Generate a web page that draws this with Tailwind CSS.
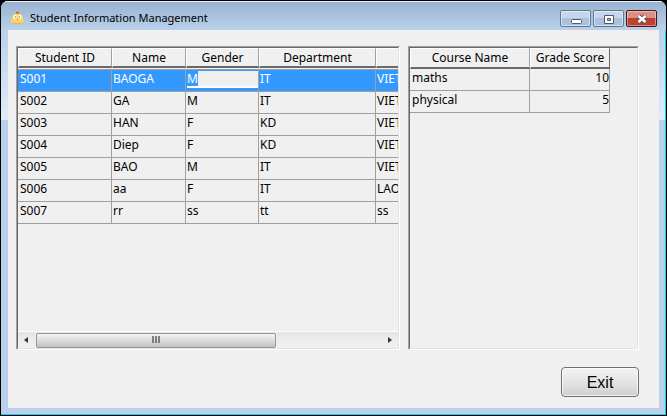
<!DOCTYPE html>
<html lang="en">
<head>
<meta charset="utf-8">
<title>Student Information Management</title>
<script src="https://cdn.jsdelivr.net/npm/@tailwindcss/browser@4"></script>
</head>
<body class="bg-black">
<main class="flex h-screen flex-col overflow-hidden rounded-t-lg border border-black bg-[#b9d1ea] font-['Noto_Sans','Open_Sans',sans-serif] text-xs text-black">
  <header class="flex h-[29px] shrink-0 items-start justify-between border-t border-white/70 bg-linear-to-b from-[#98b3d1] to-[#b9d1ea] pr-[9px] pl-2">
    <div class="flex items-center gap-[5px] pt-2">
      <svg class="size-4" viewBox="0 0 16 16" aria-hidden="true">
        <path d="M7.500 4 7 2.500 8.500 1.500 10 2.500 10 4Z" fill="#d8403c"/>
        <path d="M2 11C2 9.500 3.200 8.500 3.500 6.500 4 4.500 6 3.500 8.500 3.500S13 4.500 13.500 6.500C13.800 8.500 15 9.500 15 11c0 2.200-3 3-6.500 3S2 13.200 2 11Z" fill="#fbd75a"/>
        <path d="M3 12c2 1.500 9 1.500 11 0-.5 1.500-3 2-5.500 2S3.500 13.500 3 12Z" fill="#f2b130"/>
        <circle cx="6.300" cy="7" r="1.900" fill="#fff"/><circle cx="10.700" cy="7" r="1.900" fill="#fff"/>
        <circle cx="6.700" cy="7" r=".7" fill="#765"/><circle cx="10.300" cy="7" r=".7" fill="#765"/>
        <path d="m7.600 8.500h1.800l-.9 1.800Z" fill="#e87a30"/>
      </svg>
      <h1 class="text-[11px] leading-4">Student Information Management</h1>
    </div>
    <div class="flex gap-[2px] pt-2">
      <button aria-label="Minimize" class="flex h-[17px] w-[31px] items-center justify-center rounded-xs border border-[#5f7896] bg-linear-to-b from-[#c5d7ea] from-50% to-[#a9c1dc] to-50% inset-ring inset-ring-white/50"><svg class="h-3 w-4" viewBox="0 0 16 12"><rect x="3.500" y="6.500" width="10" height="4" rx="1" fill="#fff" stroke="#535666"/></svg></button>
      <button aria-label="Maximize" class="flex h-[17px] w-[31px] items-center justify-center rounded-xs border border-[#5f7896] bg-linear-to-b from-[#c5d7ea] from-50% to-[#a9c1dc] to-50% inset-ring inset-ring-white/50"><svg class="h-3 w-4" viewBox="0 0 16 12"><path fill-rule="evenodd" d="M3.500 2.500h9v8h-9Zm3 3v2h3v-2Z" fill="#fff" stroke="#535666"/></svg></button>
      <button aria-label="Close" class="flex h-[17px] w-[31px] items-center justify-center rounded-xs border border-[#4b1520] bg-linear-to-b from-[#dc8f83] from-50% to-[#bd4030] to-50% inset-ring inset-ring-white/40"><svg class="h-3 w-4" viewBox="0 0 16 12"><path d="m4.500 3 7 6m0-6-7 6" stroke="#535666" stroke-width="4.500"/><path d="m4.500 3 7 6m0-6-7 6" stroke="#fff" stroke-width="2.500"/></svg></button>
    </div>
  </header>
  <div class="flex min-h-0 flex-1 border-r border-b border-[#20c8f0] bg-linear-to-b from-[#b9d1ea] to-[#e0ecf8] bg-size-[100%_90px] bg-no-repeat pr-[6px] pb-[6px] pl-[7px]">
    <div class="flex min-w-0 flex-1 flex-col gap-[17px] bg-[#f0f0f0] pt-4 pr-5 pl-2">
      <div class="flex h-[304px] gap-2">
        <section aria-label="Students" class="flex w-[384px] shrink-0 flex-col border border-[#a0a0a0] border-r-white border-b-white">
          <div class="flex min-h-0 flex-1 flex-col overflow-hidden border border-[#696969] border-r-[#e3e3e3] border-b-[#e3e3e3]">
            <div class="min-h-0 flex-1 overflow-hidden">
              <table class="w-[380px] table-fixed border-separate border-spacing-0">
                <colgroup><col class="w-[94px]"><col class="w-[74px]"><col class="w-[73px]"><col class="w-[117px]"><col></colgroup>
                <thead>
                  <tr class="h-5 *:border-t *:border-r *:border-b-2 *:border-l *:border-t-white *:border-l-white *:border-r-[#a0a0a0] *:border-b-[#696969] *:p-0 *:font-normal *:leading-4 *:last:border-r-0"><th>Student ID</th><th>Name</th><th>Gender</th><th>Department</th><th></th></tr>
                  <tr aria-hidden="true"><td colspan="5" class="h-[2px] border-b border-[#a0a0a0] p-0"></td></tr>
                </thead>
                <tbody class="[&_td]:h-[22px] [&_td]:overflow-hidden [&_td]:border-r [&_td]:border-b [&_td]:border-[#a0a0a0] [&_td]:p-0 [&_td]:pt-px [&_td]:pl-px [&_td]:align-top [&_td]:leading-4 [&_td]:first:pl-[2px] [&_td]:last:border-r-0">
                  <tr class="bg-[#3399ff] text-white"><td>S001</td><td>BAOGA</td><td><div class="flex h-[17px] items-start border-b-2 border-white bg-[#f0f0f0]"><input aria-label="Gender" value="M" class="field-sizing-content h-[15px] min-w-[10px] bg-[#3399ff] text-white outline-none"></div></td><td>IT</td><td>VIET</td></tr>
                  <tr><td>S002</td><td>GA</td><td>M</td><td>IT</td><td>VIET</td></tr>
                  <tr><td>S003</td><td>HAN</td><td>F</td><td>KD</td><td>VIET</td></tr>
                  <tr><td>S004</td><td>Diep</td><td>F</td><td>KD</td><td>VIET</td></tr>
                  <tr><td>S005</td><td>BAO</td><td>M</td><td>IT</td><td>VIET</td></tr>
                  <tr><td>S006</td><td>aa</td><td>F</td><td>IT</td><td>LAO</td></tr>
                  <tr><td>S007</td><td>rr</td><td>ss</td><td>tt</td><td>ss</td></tr>
                </tbody>
              </table>
            </div>
            <div class="flex h-[17px] shrink-0 items-center border-t border-white bg-linear-to-b from-[#e4e4e4] via-[#ededed] to-[#f0f0f0]">
              <button aria-label="Scroll left" class="mr-[2px] flex h-4 w-4 items-center justify-center"><svg class="h-[6px] w-1" viewBox="0 0 4 6"><path d="M4 0v6L0 3Z" fill="#333"/></svg></button>
              <div class="flex h-[15px] w-[240px] items-center justify-center rounded-xs border border-[#979797] bg-linear-to-b from-[#f3f3f3] via-[#dcdcdc] to-[#c2c2c2]">
                <svg class="h-2 w-[9px]" viewBox="0 0 9 8"><path d="M1 0v7M4 0v7M7 0v7" stroke="#606060" stroke-width="1.500"/></svg>
              </div>
              <button aria-label="Scroll right" class="ml-auto flex h-4 w-4 items-center justify-center"><svg class="h-[6px] w-1" viewBox="0 0 4 6"><path d="M0 0v6L4 3Z" fill="#333"/></svg></button>
            </div>
          </div>
        </section>
        <section aria-label="Grades" class="flex flex-1 flex-col border border-[#a0a0a0] border-r-white border-b-white">
          <div class="flex-1 border border-[#696969] border-r-[#e3e3e3] border-b-[#e3e3e3]">
            <table class="w-[200px] table-fixed border-separate border-spacing-0">
              <colgroup><col class="w-[120px]"><col class="w-[80px]"></colgroup>
              <thead><tr class="h-[21px] *:border-t *:border-r *:border-b-2 *:border-l *:border-t-white *:border-l-white *:border-r-[#a0a0a0] *:border-b-[#696969] *:p-0 *:font-normal *:leading-4 *:last:border-r-[#696969]"><th>Course Name</th><th>Grade Score</th></tr></thead>
              <tbody class="[&_td]:h-[22px] [&_td]:border-r [&_td]:border-b [&_td]:border-[#a0a0a0] [&_td]:p-0 [&_td]:pl-[2px] [&_td]:align-top [&_td]:leading-[18px]">
                <tr><td>maths</td><td class="text-right">10</td></tr>
                <tr><td>physical</td><td class="text-right">5</td></tr>
              </tbody>
            </table>
          </div>
        </section>
      </div>
      <button class="h-[30px] w-[78px] self-end rounded-sm border border-[#707070] bg-linear-to-b from-[#f2f2f2] via-[#e4e4e4] to-[#cfcfcf] pt-px font-['Liberation_Sans',Arial,sans-serif] text-base inset-ring inset-ring-white/70">Exit</button>
    </div>
  </div>
</main>
</body>
</html>
